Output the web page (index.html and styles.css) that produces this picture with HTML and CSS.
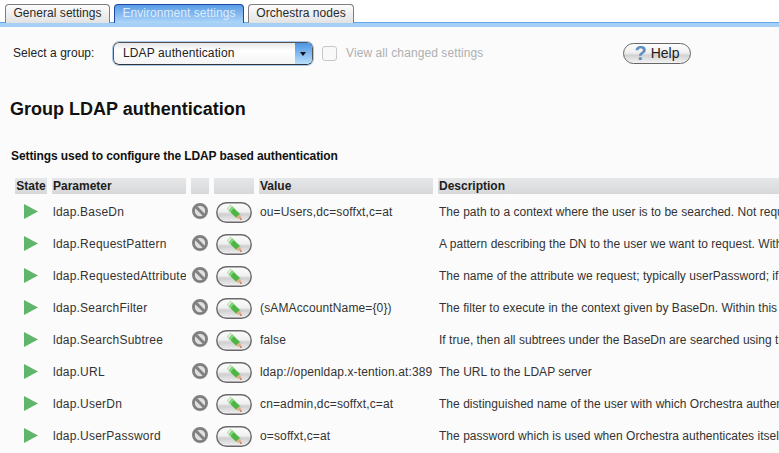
FILE: index.html
```html
<!DOCTYPE html>
<html lang="en">
<head>
<meta charset="utf-8">
<title>Environment settings</title>
<link rel="stylesheet" href="styles.css">
</head>
<body>
<svg class="defs" width="0" height="0">
  <defs>
    <linearGradient id="gb" x1="0" y1="0" x2="0" y2="1"><stop offset="0" stop-color="#fdfdfd"/><stop offset=".45" stop-color="#f0f0f0"/><stop offset=".6" stop-color="#cfcfcf"/><stop offset="1" stop-color="#f2f2f2"/></linearGradient>
    <symbol id="state" viewBox="0 0 14 15"><path d="M0 0 L14 7.500 L0 15 Z" fill="#5fb56a"/></symbol>
    <symbol id="block" viewBox="0 0 16 16"><circle cx="8" cy="8" r="6.600" fill="#dedede" stroke="#808080" stroke-width="2.800"/><path d="M3.500 3.500 L12.500 12.500" stroke="#808080" stroke-width="2.800"/></symbol>
    <symbol id="edit" viewBox="0 0 36 21">
      <rect x=".75" y=".75" width="34.500" height="19.500" rx="9.750" fill="url(#gb)" stroke="#6a6a6a" stroke-width="1.400"/>
      <path d="M11 6.800 L14.500 2.800 L24 12 L20 15.800 Z" fill="#4cb544"/>
      <path d="M11 6.800 L14.500 2.800 L16.200 4.400 L12.700 8.400 Z" fill="#d6efcb"/>
      <path d="M13 8.700 L16.500 4.700 L18 6.100 L14.500 10.100 Z" fill="#8bd67e"/>
      <path d="M20 15.800 L24 12 L25.700 17.800 Z" fill="#dfae86"/>
      <path d="M24 17.300 L25.100 15.900 L25.700 17.800 Z" fill="#a8323a"/>
    </symbol>
  </defs>
</svg>
<nav class="tabs">
  <span class="tab">General settings</span>
  <span class="tab active">Environment settings</span>
  <span class="tab">Orchestra nodes</span>
</nav>
<main class="page">
  <div class="toolbar">
    <label class="group-label">Select a group:</label>
    <div class="select"><span>LDAP authentication</span><i class="arrow"></i></div>
    <span class="check"></span>
    <span class="check-label">View all changed settings</span>
    <button class="help"><b>?</b>Help</button>
  </div>
  <h1>Group LDAP authentication</h1>
  <h2>Settings used to configure the LDAP based authentication</h2>
  <table>
    <colgroup><col class="c1"><col class="c2"><col class="c3"><col class="c4"><col class="c5"><col class="c6"></colgroup>
    <thead><tr><th class="center">State</th><th>Parameter</th><th></th><th></th><th>Value</th><th>Description</th></tr></thead>
    <tbody>
      <tr><td class="st"><svg class="i-state"><use href="#state"/></svg></td><td class="param">ldap.BaseDn</td><td class="ic"><svg class="i-block"><use href="#block"/></svg></td><td class="ic"><svg class="i-edit"><use href="#edit"/></svg></td><td>ou=Users,dc=soffxt,c=at</td><td class="desc">The path to a context where the user is to be searched. Not required</td></tr>
      <tr><td class="st"><svg class="i-state"><use href="#state"/></svg></td><td class="param">ldap.RequestPattern</td><td class="ic"><svg class="i-block"><use href="#block"/></svg></td><td class="ic"><svg class="i-edit"><use href="#edit"/></svg></td><td></td><td class="desc">A pattern describing the DN to the user we want to request. With</td></tr>
      <tr><td class="st"><svg class="i-state"><use href="#state"/></svg></td><td class="param">ldap.RequestedAttribute</td><td class="ic"><svg class="i-block"><use href="#block"/></svg></td><td class="ic"><svg class="i-edit"><use href="#edit"/></svg></td><td></td><td class="desc">The name of the attribute we request; typically userPassword; if</td></tr>
      <tr><td class="st"><svg class="i-state"><use href="#state"/></svg></td><td class="param">ldap.SearchFilter</td><td class="ic"><svg class="i-block"><use href="#block"/></svg></td><td class="ic"><svg class="i-edit"><use href="#edit"/></svg></td><td>(sAMAccountName={0})</td><td class="desc">The filter to execute in the context given by BaseDn. Within this</td></tr>
      <tr><td class="st"><svg class="i-state"><use href="#state"/></svg></td><td class="param">ldap.SearchSubtree</td><td class="ic"><svg class="i-block"><use href="#block"/></svg></td><td class="ic"><svg class="i-edit"><use href="#edit"/></svg></td><td>false</td><td class="desc">If true, then all subtrees under the BaseDn are searched using the</td></tr>
      <tr><td class="st"><svg class="i-state"><use href="#state"/></svg></td><td class="param">ldap.URL</td><td class="ic"><svg class="i-block"><use href="#block"/></svg></td><td class="ic"><svg class="i-edit"><use href="#edit"/></svg></td><td>ldap://openldap.x-tention.at:389</td><td class="desc">The URL to the LDAP server</td></tr>
      <tr><td class="st"><svg class="i-state"><use href="#state"/></svg></td><td class="param">ldap.UserDn</td><td class="ic"><svg class="i-block"><use href="#block"/></svg></td><td class="ic"><svg class="i-edit"><use href="#edit"/></svg></td><td>cn=admin,dc=soffxt,c=at</td><td class="desc">The distinguished name of the user with which Orchestra authenticates</td></tr>
      <tr><td class="st"><svg class="i-state"><use href="#state"/></svg></td><td class="param">ldap.UserPassword</td><td class="ic"><svg class="i-block"><use href="#block"/></svg></td><td class="ic"><svg class="i-edit"><use href="#edit"/></svg></td><td>o=soffxt,c=at</td><td class="desc">The password which is used when Orchestra authenticates itself</td></tr>
    </tbody>
  </table>
</main>
</body>
</html>
```

FILE: styles.css
```css
* { box-sizing: border-box; }
html, body { margin: 0; height: 100%; overflow: hidden; }
body { width: 779px; height: 453px; background: #fbfbfb; font-family: "Liberation Sans", Arial, sans-serif; font-size: 12px; color: #222; position: relative; }
.defs { position: absolute; }

.tabs { display: flex; gap: 4px; height: 27px; padding: 4px 0 0 5px; border-bottom: 4px solid #a5cff4; background: #fff; box-shadow: inset 0 -1px 0 #66a6ea; }
.tab { height: 19px; padding: 1px 0 0; font-size: 12px; line-height: 14px; letter-spacing: .05px; text-align: center; color: #2a2a2a; background: linear-gradient(#fdfdfd, #e2e2e2); border: 1px solid #7e7e7e; border-bottom: 0; border-radius: 4px 4px 0 0; white-space: nowrap; width: 105px; }
.tab.active { width: 130px; color: #dfecfb; background: linear-gradient(#5a9ce6, #aed6f8); border-color: #1c4aa0; border-width: 1px 1px 0; }
.tab:last-child { width: 106px; }

.page { padding: 0 0 0 10px; overflow: hidden; }
.toolbar { display: flex; align-items: center; height: 52px; margin-left: 3px; }
.group-label { width: 100px; color: #222; letter-spacing: .05px; }
.select { display: flex; align-items: center; justify-content: space-between; width: 200px; height: 23px; padding-left: 9px; border: 1px solid #555; border-bottom-color: #333; outline: 1px solid #a8c8ec; border-radius: 6px; background: linear-gradient(#e6e6e6, #fff 35%, #f4f4f4); font-size: 12px; letter-spacing: .12px; color: #222; overflow: hidden; }
.arrow { position: relative; width: 17px; height: 100%; background: linear-gradient(#4a95e2, #b9dffb); }
.arrow::after { content: ""; position: absolute; left: 5px; top: 9px; border: 3.500px solid transparent; border-top: 4px solid #111; border-bottom: 0; }
.check { width: 15px; height: 15px; margin-left: 9px; border: 1px solid #c8c8c8; border-radius: 3px; background: #f9f9f9; }
.check-label { margin-left: 9px; color: #b0b0b0; width: 277px; letter-spacing: .09px; }
.help { display: flex; align-items: center; justify-content: center; gap: 4px; width: 68px; height: 21px; padding: 0; border: 1px solid #666; border-radius: 11px; background: linear-gradient(#fdfdfd, #f0f0f0 45%, #d2d2d2 60%, #f2f2f2); font-family: inherit; font-size: 14px; color: #1c1c1c; }
.help b { font-size: 20px; line-height: 20px; color: #5b8fc4; }

h1 { margin: 19px 0 0; font-size: 18px; line-height: 22px; font-weight: bold; color: #111; }
h2 { margin: 29px 0 0 1px; font-size: 12px; line-height: 14px; font-weight: bold; letter-spacing: -.09px; color: #111; }

table { border-collapse: separate; border-spacing: 5px 2px; table-layout: fixed; width: 774px; margin: 13px -5px 0 0; }
.c1 { width: 32px; } .c2 { width: 134px; } .c3 { width: 18px; } .c4 { width: 40px; } .c5 { width: 174px; } .c6 { width: auto; }
th { height: 16px; padding: 0 0 0 1px; background: linear-gradient(#e6e7e9, #d7d8da); font-size: 12px; line-height: 16px; font-weight: bold; text-align: left; color: #1d1d1d; }
th.center { text-align: center; padding: 0; }
td { height: 30px; padding: 2px 0 0 1px; white-space: nowrap; overflow: hidden; color: #333; font-size: 12px; letter-spacing: .13px; }
td.param { letter-spacing: .22px; }
td.desc { letter-spacing: .03px; }
td.st { padding: 1px 0 0 9px; }
td.ic { padding: 0; }
svg { display: block; }
.i-state { width: 14px; height: 15px; }
.i-block { width: 16px; height: 16px; margin: 0 0 0 1px; }
.i-edit { width: 36px; height: 21px; margin: 3px 0 0 2px; }
```
